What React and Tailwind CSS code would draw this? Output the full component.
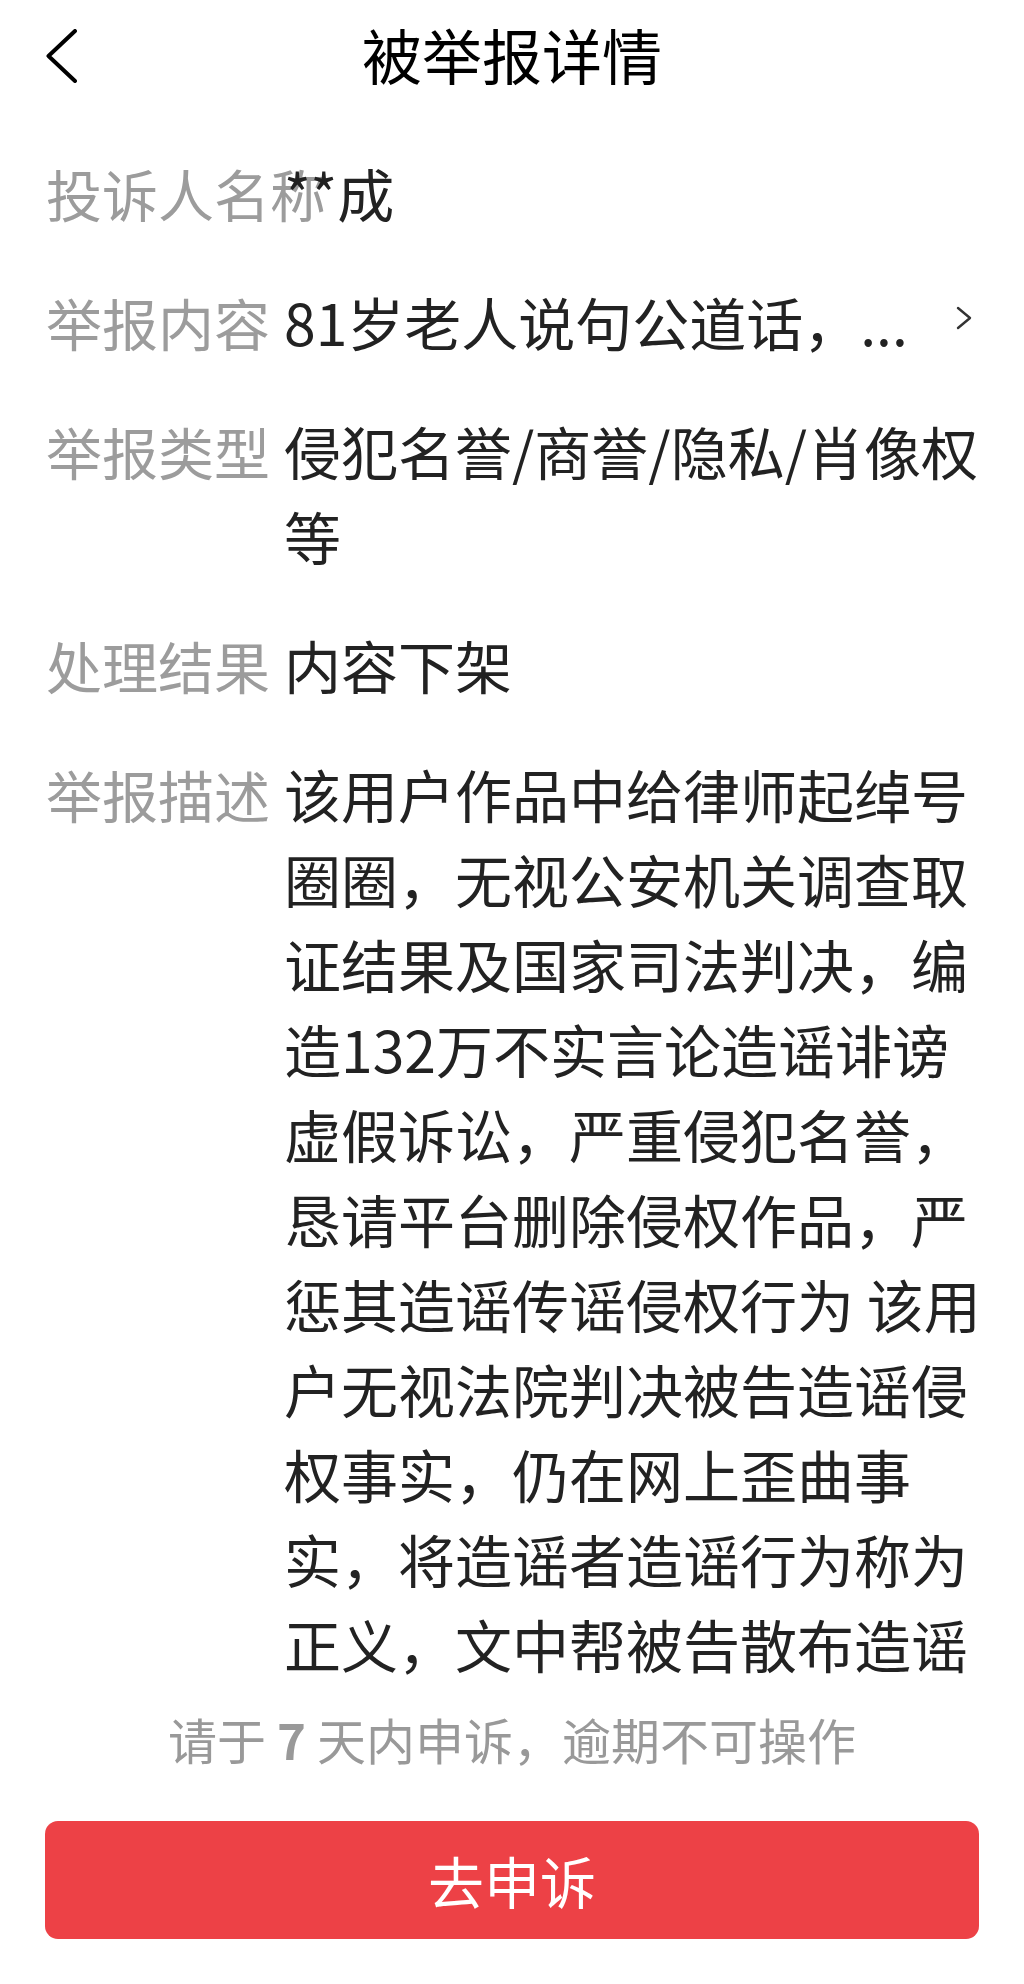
import React from "react";

const rows = [
  { label: "投诉人名称", value: "**成" },
  { label: "举报内容", value: "81岁老人说句公道话，...", arrow: true },
  { label: "举报类型", value: "侵犯名誉/商誉/隐私/肖像权等" },
  { label: "处理结果", value: "内容下架" },
  {
    label: "举报描述",
    value:
      "该用户作品中给律师起绰号圈圈，无视公安机关调查取证结果及国家司法判决，编造132万不实言论造谣诽谤虚假诉讼，严重侵犯名誉，恳请平台删除侵权作品，严惩其造谣传谣侵权行为 该用户无视法院判决被告造谣侵权事实，仍在网上歪曲事实，将造谣者造谣行为称为正义，文中帮被告散布造谣",
  },
];

export default function App() {
  return (
    <div className="w-[1024px] h-[1984px] flex flex-col bg-white overflow-hidden font-['Noto_Sans_CJK_SC',sans-serif]">
      <header className="h-[108px] shrink-0 grid grid-cols-[1fr_auto_1fr] items-center px-[46px]">
        <div className="flex items-center mt-[4px]">
          <svg width="31" height="54" viewBox="0 0 31 54" fill="none">
            <path d="M29 2 L2.5 27 L29 52" stroke="#000" strokeWidth="4" strokeLinecap="round" strokeLinejoin="round" />
          </svg>
        </div>
        <h1 className="text-[60px] leading-none text-black font-normal">被举报详情</h1>
        <div />
      </header>

      <main className="flex-1 overflow-hidden pt-[20px] pl-[46px] pr-[34px]">
        {rows.map((r) => (
          <div key={r.label} className="flex py-[22px]">
            <div className="w-[224px] shrink-0 whitespace-nowrap text-[56px] leading-[85px] text-[#9c9c9c]">
              {r.label}
            </div>
            <div className="ml-[14px] flex-1 min-w-0 flex">
              <div
                className={
                  r.arrow
                    ? "flex-1 min-w-0 whitespace-nowrap overflow-hidden text-[57px] leading-[85px] text-[#222]"
                    : "flex-1 min-w-0 text-[57px] leading-[85px] text-[#222]"
                }
              >
                {r.value}
              </div>
              {r.arrow && (
                <svg className="self-start mt-[27px] mr-[18px] shrink-0" width="16" height="24" viewBox="0 0 16 24" fill="none">
                  <path d="M2 2 L14 12 L2 22" stroke="#333" strokeWidth="2.4" strokeLinecap="round" strokeLinejoin="round" />
                </svg>
              )}
            </div>
          </div>
        ))}
      </main>

      <footer className="shrink-0 bg-white pt-[17px] pb-[45px] px-[45px]">
        <p className="text-center text-[49px] leading-[72px] text-[#999]">
          请于 <span className="font-bold">7</span> 天内申诉，逾期不可操作
        </p>
        <button className="mt-[46px] w-full h-[118px] rounded-[13px] bg-[#ed4146] text-white text-[56px] flex items-center justify-center">
          去申诉
        </button>
      </footer>
    </div>
  );
}
